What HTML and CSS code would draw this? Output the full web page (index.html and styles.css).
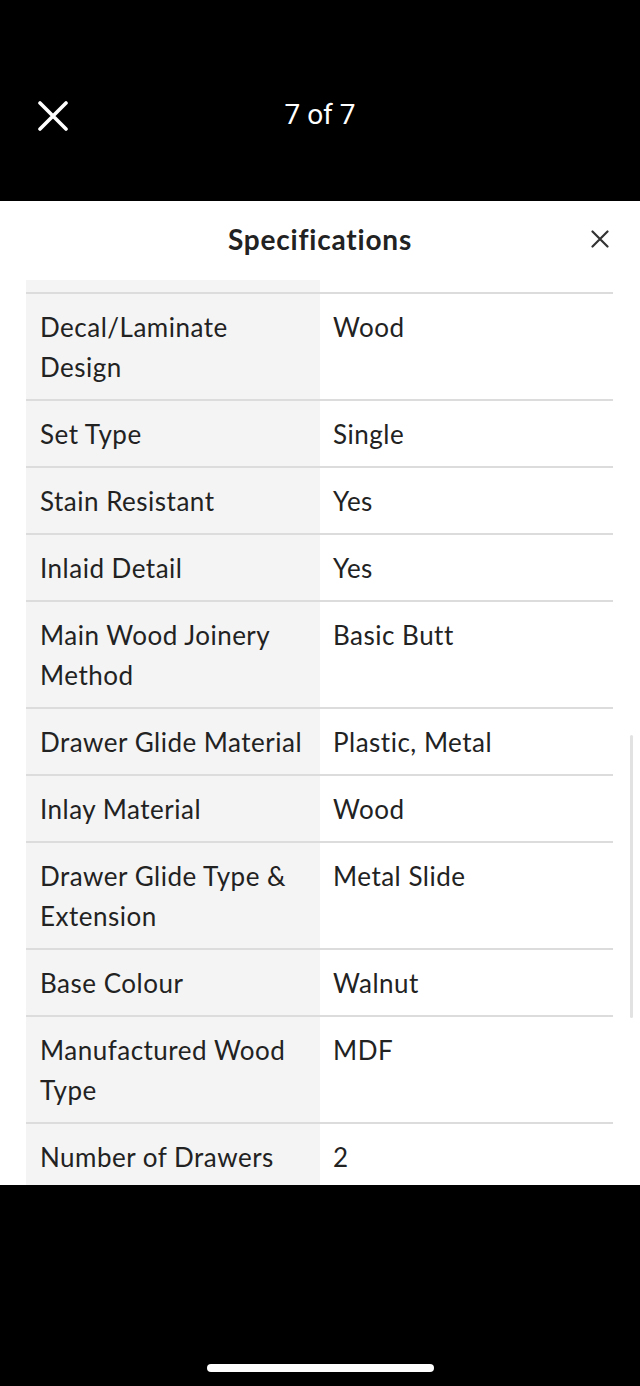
FILE: index.html
```html
<!DOCTYPE html>
<html>
<head>
<meta charset="utf-8">
<link rel="stylesheet" href="styles.css">
</head>
<body>
<div class="topbar">
  <svg class="close-white" width="30" height="30" viewBox="0 0 30 30"><path d="M2 2 L28 28 M28 2 L2 28" stroke="#fff" stroke-width="3.6" stroke-linecap="round"/></svg>
  <div class="counter">7 of 7</div>
</div>
<div class="sheet">
  <div class="sheet-head">
    <h1 class="sheet-title">Specifications</h1>
    <svg class="close-dark" width="18" height="18" viewBox="0 0 18 18"><path d="M1.5 1.5 L16.5 16.5 M16.5 1.5 L1.5 16.5" stroke="#333" stroke-width="2.2" stroke-linecap="round"/></svg>
  </div>
  <div class="scroll">
    <div class="specs">
      <div class="row partial"><div class="k"></div><div class="v"></div></div>
      <div class="row"><div class="k">Decal/Laminate Design</div><div class="v">Wood</div></div>
      <div class="row"><div class="k">Set Type</div><div class="v">Single</div></div>
      <div class="row"><div class="k">Stain Resistant</div><div class="v">Yes</div></div>
      <div class="row"><div class="k">Inlaid Detail</div><div class="v">Yes</div></div>
      <div class="row"><div class="k">Main Wood Joinery Method</div><div class="v">Basic Butt</div></div>
      <div class="row"><div class="k">Drawer Glide Material</div><div class="v">Plastic, Metal</div></div>
      <div class="row"><div class="k">Inlay Material</div><div class="v">Wood</div></div>
      <div class="row"><div class="k">Drawer Glide Type &amp; Extension</div><div class="v">Metal Slide</div></div>
      <div class="row"><div class="k">Base Colour</div><div class="v">Walnut</div></div>
      <div class="row"><div class="k">Manufactured Wood Type</div><div class="v">MDF</div></div>
      <div class="row"><div class="k">Number of Drawers</div><div class="v">2</div></div>
    </div>
    <div class="scrollbar"></div>
  </div>
</div>
<div class="bottom">
  <div class="home-indicator"></div>
</div>
</body>
</html>
```
FILE: styles.css
```css
* { box-sizing: border-box; }
html, body { margin: 0; padding: 0; }
body {
  background: #000;
  width: 640px;
  height: 1386px;
  overflow: hidden;
  font-family: "Lato", "Noto Sans", sans-serif;
}
.topbar {
  height: 201px;
  display: flex;
  align-items: center;
  position: relative;
  padding-top: 30px;
}
.close-white {
  position: absolute;
  left: 38px;
  top: 101px;
}
.counter {
  width: 100%;
  text-align: center;
  color: #fff;
  font-family: "Roboto", "Liberation Sans", sans-serif;
  font-size: 28px;
  line-height: 1;
  margin-top: -1px;
}
.sheet {
  background: #fff;
  height: 984px;
  overflow: hidden;
  display: flex;
  flex-direction: column;
}
.sheet-head {
  height: 79px;
  position: relative;
  display: flex;
  align-items: center;
  justify-content: center;
}
.sheet-title {
  margin: 0;
  font-size: 28px;
  font-weight: 700;
  color: #222;
  letter-spacing: 0.8px;
  margin-top: -3px;
}
.close-dark {
  position: absolute;
  right: 31px;
  top: 29px;
}
.scroll {
  position: relative;
  flex: 1;
  overflow: hidden;
}
.specs {
  margin: 0 27px 0 26px;
}
.row {
  display: grid;
  grid-template-columns: 294px 1fr;
  border-top: 2px solid #dcdcdc;
  font-size: 26px;
  letter-spacing: 0.5px;
  line-height: 40px;
  color: #222;
}
.row.partial {
  border-top: 0;
  height: 12px;
}
.k {
  background: #f4f4f4;
  padding: 13px 8px 12px 14px;
}
.v {
  padding: 13px 10px 12px 13px;
}
.row.partial .k, .row.partial .v { padding: 0; }
.scrollbar {
  position: absolute;
  right: 7px;
  top: 455px;
  width: 3px;
  height: 283px;
  background: #e2e2e2;
  border-radius: 2px;
}
.bottom {
  height: 201px;
  display: flex;
  justify-content: center;
  align-items: flex-end;
  padding-bottom: 14px;
}
.home-indicator {
  width: 227px;
  height: 8px;
  border-radius: 4px;
  background: #fff;
}
```
